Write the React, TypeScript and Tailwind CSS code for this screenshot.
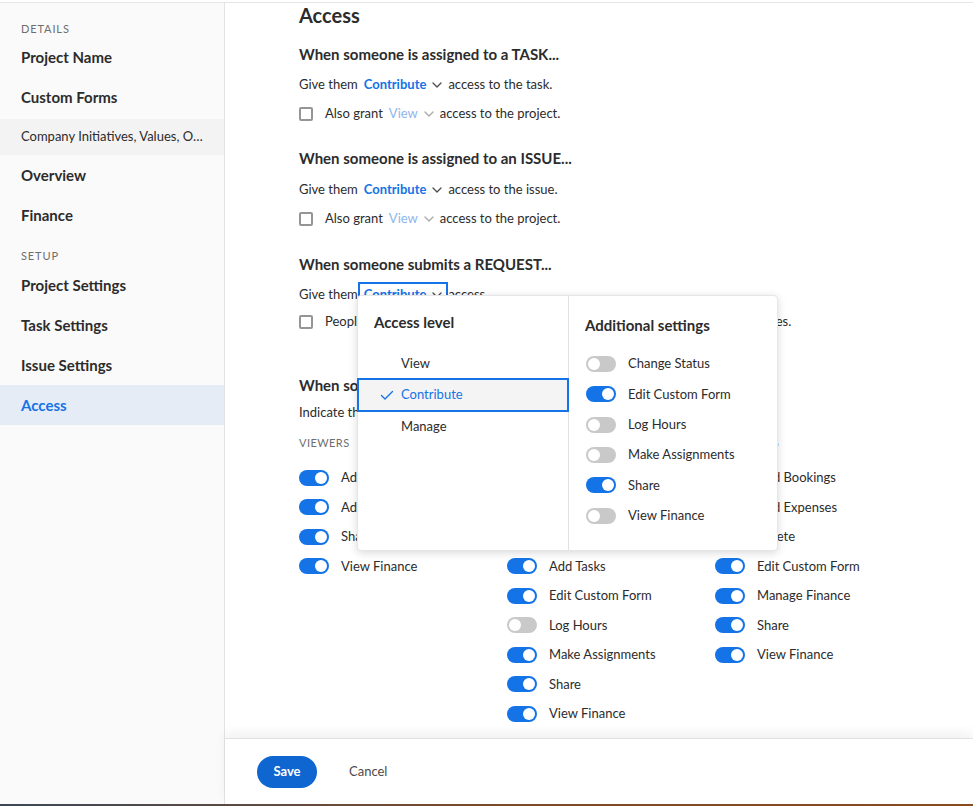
import React from "react";

const FONT = { fontFamily: "Lato, 'Open Sans', sans-serif" };

function Chevron({ light }: { light?: boolean }) {
  return (
    <svg width="10" height="6" viewBox="0 0 10 6" className="shrink-0">
      <path d="M1 1l4 4 4-4" fill="none" stroke={light ? "#a8a8a8" : "#4b4b4b"} strokeWidth="1.3" strokeLinecap="round" strokeLinejoin="round" />
    </svg>
  );
}

function Toggle({ on }: { on: boolean }) {
  return (
    <span className={on ? "relative inline-block w-[30px] h-[16px] rounded-full bg-[#1473e6] shrink-0" : "relative inline-block w-[30px] h-[16px] rounded-full bg-[#c9c9c9] shrink-0"}>
      <span className={on ? "absolute top-[2px] right-[2px] w-[12px] h-[12px] rounded-full bg-white" : "absolute top-[2px] left-[2px] w-[12px] h-[12px] rounded-full bg-white"} />
    </span>
  );
}

function Checkbox() {
  return <span className="inline-block w-[14px] h-[14px] rounded-[2px] border-2 border-[#959595] bg-white shrink-0" />;
}

function Trigger({ label, light, focused }: { label: string; light?: boolean; focused?: boolean }) {
  return (
    <span
      className={
        (focused ? "ring-2 ring-[#1473e6] " : "") +
        "inline-flex items-center gap-[6px] h-[22px] px-[4px] -mx-[4px]"
      }
    >
      <span className={light ? "text-[#8fb6ec]" : "text-[#1473e6] font-bold"}>{label}</span>
      <Chevron light={light} />
    </span>
  );
}

function SideItem({ label, active }: { label: string; active?: boolean }) {
  return (
    <div className={(active ? "bg-[#e6ecf6] text-[#1473e6] " : "text-[#2c2c2c] ") + "h-[40px] flex items-center px-[21px] text-[15px] font-bold"}>
      {label}
    </div>
  );
}

function SideLabel({ label, mt }: { label: string; mt: string }) {
  return <div className={mt + " h-[16px] flex items-center px-[21px] text-[11px] tracking-[0.08em] text-[#6e6e6e]"}>{label}</div>;
}

const col1: [string, boolean][] = [
  ["Add Documents", true],
  ["Add Issues", true],
  ["Share", true],
  ["View Finance", true],
];
const col2: [string, boolean][] = [
  ["Add Documents", true],
  ["Add Expenses", true],
  ["Add Issues", true],
  ["Add Tasks", true],
  ["Edit Custom Form", true],
  ["Log Hours", false],
  ["Make Assignments", true],
  ["Share", true],
  ["View Finance", true],
];
const col3: [string, boolean][] = [
  ["Add Bookings", true],
  ["Add Expenses", true],
  ["Delete", true],
  ["Edit Custom Form", true],
  ["Manage Finance", true],
  ["Share", true],
  ["View Finance", true],
];

function ToggleCol({ title, items }: { title: string; items: [string, boolean][] }) {
  return (
    <div className="flex flex-col">
      <div className="h-[16px] flex items-center text-[11px] tracking-[0.04em] text-[#6e6e6e]">{title}</div>
      <div className="mt-[12px] flex flex-col">
        {items.map(([l, on], i) => (
          <div key={i} className="h-[29.5px] flex items-center gap-[12px] text-[13px] text-[#2c2c2c]">
            <Toggle on={on} />
            <span>{l}</span>
          </div>
        ))}
      </div>
    </div>
  );
}

export default function App() {
  const addl: [string, boolean][] = [
    ["Change Status", false],
    ["Edit Custom Form", true],
    ["Log Hours", false],
    ["Make Assignments", false],
    ["Share", true],
    ["View Finance", false],
  ];
  return (
    <div className="relative w-[973px] h-[806px] overflow-hidden bg-white flex flex-col text-[#2c2c2c]" style={FONT}>
      <div className="h-[3px] shrink-0 border-b border-[#e6e6e6] bg-white" />
      <div className="flex flex-1 min-h-0">
        <aside className="w-[225px] shrink-0 bg-[#fafafa] border-r border-[#e3e3e3] flex flex-col">
          <SideLabel label="DETAILS" mt="mt-[18px]" />
          <SideItem label="Project Name" />
          <SideItem label="Custom Forms" />
          <div className="mt-[2px] h-[36px] bg-[#f3f3f3] flex items-center px-[21px] text-[13px] text-[#2c2c2c]">
            <span className="truncate">Company Initiatives, Values, Objectives</span>
          </div>
          <SideItem label="Overview" />
          <SideItem label="Finance" />
          <SideLabel label="SETUP" mt="mt-[13px]" />
          <div className="mt-[1px]" />
          <SideItem label="Project Settings" />
          <SideItem label="Task Settings" />
          <SideItem label="Issue Settings" />
          <SideItem label="Access" active />
        </aside>
        <main className="flex-1 flex flex-col min-w-0">
          <div className="flex-1 min-h-0 overflow-hidden pl-[74px]">
            <div className="h-[24px] flex items-center text-[20px] font-bold">Access</div>

            <div className="mt-[17px] h-[20px] flex items-center text-[15px] font-bold">When someone is assigned to a TASK...</div>
            <div className="mt-[11px] h-[20px] flex items-center gap-[6px] text-[13px]">
              <span>Give them</span>
              <Trigger label="Contribute" />
              <span>access to the task.</span>
            </div>
            <div className="mt-[9px] h-[20px] flex items-center text-[13px]">
              <Checkbox />
              <span className="ml-[12px] flex items-center gap-[6px]">
                <span>Also grant</span>
                <Trigger label="View" light />
                <span>access to the project.</span>
              </span>
            </div>

            <div className="mt-[24px] h-[20px] flex items-center text-[15px] font-bold">When someone is assigned to an ISSUE...</div>
            <div className="mt-[12px] h-[20px] flex items-center gap-[6px] text-[13px]">
              <span>Give them</span>
              <Trigger label="Contribute" />
              <span>access to the issue.</span>
            </div>
            <div className="mt-[9px] h-[20px] flex items-center text-[13px]">
              <Checkbox />
              <span className="ml-[12px] flex items-center gap-[6px]">
                <span>Also grant</span>
                <Trigger label="View" light />
                <span>access to the project.</span>
              </span>
            </div>

            <div className="mt-[25px] h-[20px] flex items-center text-[15px] font-bold">When someone submits a REQUEST...</div>
            <div className="mt-[11px] h-[20px] flex items-center gap-[6px] text-[13px]">
              <span>Give them</span>
              <Trigger label="Contribute" focused />
              <span>access.</span>
            </div>
            <div className="mt-[7px] h-[20px] flex items-center text-[13px]">
              <Checkbox />
              <span className="ml-[12px]">People from the same company can view all requests submitted to project queues.</span>
            </div>

            <div className="mt-[43px] h-[20px] flex items-center text-[15px] font-bold">When someone is shared on this project...</div>
            <div className="mt-[8px] h-[20px] flex items-center text-[13px]">Indicate the default permissions they will have.</div>

            <div className="mt-[12px] grid grid-cols-[208px_208px_208px]">
              <ToggleCol title="VIEWERS" items={col1} />
              <ToggleCol title="CONTRIBUTORS" items={col2} />
              <ToggleCol title="MANAGERS" items={col3} />
            </div>
          </div>
          <footer className="h-[66px] shrink-0 bg-white border-t border-[#e1e1e1] shadow-[0_-6px_10px_rgba(0,0,0,0.05)] flex items-center pl-[32px] gap-[32px]">
            <button className="w-[60px] h-[32px] rounded-full bg-[#0f66d0] text-white text-[13px] font-bold">Save</button>
            <span className="text-[13px] text-[#4b4b4b]">Cancel</span>
          </footer>
        </main>
      </div>
      <div className="h-[2px] shrink-0 bg-gradient-to-r from-[#3b4756] via-[#7a4a28] to-[#8a4a1e]" />

      <div className="absolute left-[357px] top-[295px] w-[421px] h-[256px] bg-white rounded-[4px] border border-[#e6e6e6] shadow-[0_2px_8px_rgba(0,0,0,0.15)] flex">
        <div className="w-[211px] shrink-0 border-r border-[#e1e1e1] flex flex-col">
          <div className="mt-[16px] h-[20px] flex items-center pl-[16px] text-[15px] font-bold">Access level</div>
          <div className="mt-[15px] h-[31px] pt-[3px] flex items-center pl-[43px] text-[13px]">View</div>
          <div className="h-[34px] -ml-px -mr-px flex items-center bg-[#f4f4f4] border-2 border-[#1473e6] text-[#1473e6] text-[13px]">
            <svg width="14" height="10" viewBox="0 0 14 10" className="ml-[21px]">
              <path d="M1.5 5.5l3.5 3.5 7.5-7.5" fill="none" stroke="#1473e6" strokeWidth="1.4" strokeLinecap="round" strokeLinejoin="round" />
            </svg>
            <span className="ml-[7px]">Contribute</span>
          </div>
          <div className="h-[30px] flex items-center pl-[43px] text-[13px]">Manage</div>
        </div>
        <div className="flex-1 flex flex-col pl-[16px]">
          <div className="mt-[19px] h-[20px] flex items-center text-[15px] font-bold">Additional settings</div>
          <div className="mt-[14px] flex flex-col">
            {addl.map(([l, on], i) => (
              <div key={i} className="h-[30.3px] flex items-center gap-[12px] text-[13px] pl-[1px]">
                <Toggle on={on} />
                <span>{l}</span>
              </div>
            ))}
          </div>
        </div>
      </div>
    </div>
  );
}
